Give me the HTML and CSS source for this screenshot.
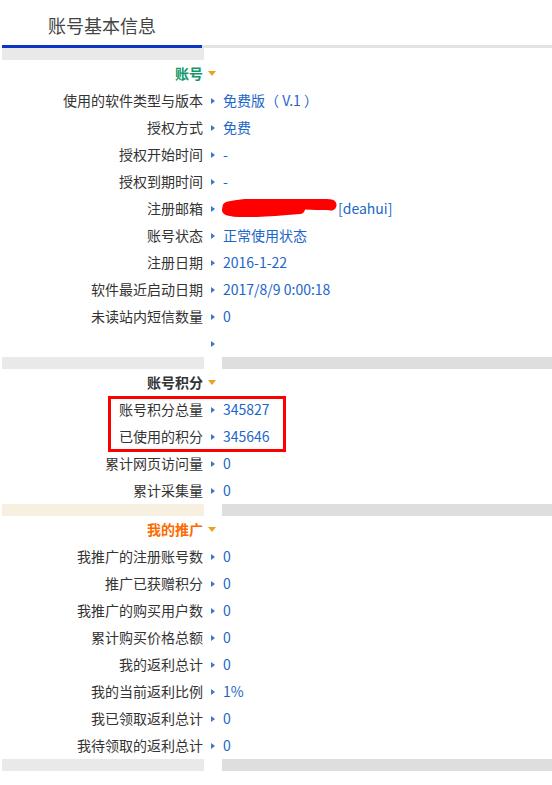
FILE: index.html
```html
<!DOCTYPE html>
<html lang="zh-CN">
<head>
<meta charset="utf-8">
<title>账号基本信息</title>
<link rel="stylesheet" href="styles.css">
</head>
<body>
<div class="page">
  <div class="header"><span class="header-title">账号基本信息</span></div>
  <div class="tabline"><div class="tab-active"></div><div class="tab-rest"></div></div>
  <div class="sep sep-top"><div class="sep-l"></div></div>

  <div class="section">
    <div class="row title-row"><div class="lbl title green">账号</div><div class="arr"><span class="tri-down"></span></div><div class="val"></div></div>
    <div class="row"><div class="lbl">使用的软件类型与版本</div><div class="arr"><span class="tri"></span></div><div class="val">免费版（ V.1 ）</div></div>
    <div class="row"><div class="lbl">授权方式</div><div class="arr"><span class="tri"></span></div><div class="val">免费</div></div>
    <div class="row"><div class="lbl">授权开始时间</div><div class="arr"><span class="tri"></span></div><div class="val">-</div></div>
    <div class="row"><div class="lbl">授权到期时间</div><div class="arr"><span class="tri"></span></div><div class="val">-</div></div>
    <div class="row"><div class="lbl">注册邮箱</div><div class="arr"><span class="tri"></span></div><div class="val"><span class="redact"><svg width="118" height="18" viewBox="0 0 118 18"><path d="M8 8 C 25 4, 60 4, 85 5 S 108 5, 111 6" stroke="#ff0000" stroke-width="11" stroke-linecap="round" fill="none"/><path d="M7 11 C 15 15, 45 13, 80 10" stroke="#ff0000" stroke-width="10" stroke-linecap="round" fill="none"/></svg></span>[deahui]</div></div>
    <div class="row"><div class="lbl">账号状态</div><div class="arr"><span class="tri"></span></div><div class="val">正常使用状态</div></div>
    <div class="row"><div class="lbl">注册日期</div><div class="arr"><span class="tri"></span></div><div class="val">2016-1-22</div></div>
    <div class="row"><div class="lbl">软件最近启动日期</div><div class="arr"><span class="tri"></span></div><div class="val">2017/8/9 0:00:18</div></div>
    <div class="row"><div class="lbl">未读站内短信数量</div><div class="arr"><span class="tri"></span></div><div class="val">0</div></div>
    <div class="row"><div class="lbl"></div><div class="arr"><span class="tri"></span></div><div class="val"></div></div>
  </div>
  <div class="sep"><div class="sep-l"></div><div class="sep-gap"></div><div class="sep-r"></div></div>

  <div class="section">
    <div class="row title-row"><div class="lbl title dark">账号积分</div><div class="arr"><span class="tri-down"></span></div><div class="val"></div></div>
    <div class="highlight">
      <div class="row"><div class="lbl">账号积分总量</div><div class="arr"><span class="tri"></span></div><div class="val">345827</div></div>
      <div class="row"><div class="lbl">已使用的积分</div><div class="arr"><span class="tri"></span></div><div class="val">345646</div></div>
      <div class="red-box"></div>
    </div>
    <div class="row"><div class="lbl">累计网页访问量</div><div class="arr"><span class="tri"></span></div><div class="val">0</div></div>
    <div class="row"><div class="lbl">累计采集量</div><div class="arr"><span class="tri"></span></div><div class="val">0</div></div>
  </div>
  <div class="sep"><div class="sep-l beige"></div><div class="sep-gap"></div><div class="sep-r"></div></div>

  <div class="section">
    <div class="row title-row"><div class="lbl title orange">我的推广</div><div class="arr"><span class="tri-down"></span></div><div class="val"></div></div>
    <div class="row"><div class="lbl">我推广的注册账号数</div><div class="arr"><span class="tri"></span></div><div class="val">0</div></div>
    <div class="row"><div class="lbl">推广已获赠积分</div><div class="arr"><span class="tri"></span></div><div class="val">0</div></div>
    <div class="row"><div class="lbl">我推广的购买用户数</div><div class="arr"><span class="tri"></span></div><div class="val">0</div></div>
    <div class="row"><div class="lbl">累计购买价格总额</div><div class="arr"><span class="tri"></span></div><div class="val">0</div></div>
    <div class="row"><div class="lbl">我的返利总计</div><div class="arr"><span class="tri"></span></div><div class="val">0</div></div>
    <div class="row"><div class="lbl">我的当前返利比例</div><div class="arr"><span class="tri"></span></div><div class="val">1%</div></div>
    <div class="row"><div class="lbl">我已领取返利总计</div><div class="arr"><span class="tri"></span></div><div class="val">0</div></div>
    <div class="row"><div class="lbl">我待领取的返利总计</div><div class="arr"><span class="tri"></span></div><div class="val">0</div></div>
  </div>
  <div class="sep"><div class="sep-l"></div><div class="sep-gap"></div><div class="sep-r"></div></div>
</div>
</body>
</html>
```

FILE: styles.css
```css
html, body {
  margin: 0;
  padding: 0;
  background: #ffffff;
}
body {
  font-family: "Noto Sans CJK SC", "Noto Sans", sans-serif;
  font-size: 14px;
  color: #333333;
}
.page {
  width: 552px;
  overflow: hidden;
}
.header {
  height: 45px;
  display: flex;
  align-items: center;
  padding-left: 48px;
}
.header-title {
  font-size: 18px;
  color: #444444;
  line-height: 20px;
  margin-top: 5px;
}
.tabline {
  display: flex;
  height: 3px;
  padding-left: 2px;
}
.tab-active {
  width: 200px;
  background: #0a35c5;
}
.tab-rest {
  flex: 1;
  background: #e3e3e3;
  height: 3px;
}
.sep {
  display: grid;
  grid-template-columns: 202px 18px 1fr;
  height: 12px;
  margin-left: 2px;
}
.sep-l { background: #e9e9e9; }
.sep-l.beige { background: #f7f0e1; }
.sep-r { background: #dedede; }
.section {
  margin-left: 2px;
}
.row {
  display: grid;
  grid-template-columns: 202px 18px 1fr;
  height: 27px;
  align-items: center;
}
.lbl {
  text-align: right;
  padding-right: 1px;
  padding-bottom: 2px;
  white-space: nowrap;
  line-height: 18px;
  color: #333333;
}
.title { font-weight: bold; }
.title.green { color: #12986a; }
.title.dark { color: #333333; }
.title.orange { color: #ff6a00; }
.arr {
  display: flex;
  align-items: center;
  height: 27px;
}
.tri {
  display: block;
  width: 0;
  height: 0;
  margin-left: 7px;
  border-top: 3px solid transparent;
  border-bottom: 3px solid transparent;
  border-left: 4px solid #3a78c8;
  margin-top: 1px;
}
.tri-down {
  display: block;
  width: 0;
  height: 0;
  margin-left: 4px;
  border-left: 4.5px solid transparent;
  border-right: 4.5px solid transparent;
  border-top: 5px solid #eba021;
  margin-top: 0;
}
.val {
  padding-left: 1px;
  padding-bottom: 2px;
  color: #1b66c9;
  white-space: nowrap;
  line-height: 18px;
  display: flex;
  align-items: center;
}
.redact {
  display: inline-block;
  width: 116px;
  height: 18px;
  margin-left: -3px;
  margin-right: 2px;
}
.redact svg { display: block; }
.highlight {
  position: relative;
}
.red-box {
  position: absolute;
  left: 106px;
  top: 0;
  width: 178px;
  height: 56px;
  border: 3px solid #ff0000;
  box-sizing: border-box;
  pointer-events: none;
}
```
